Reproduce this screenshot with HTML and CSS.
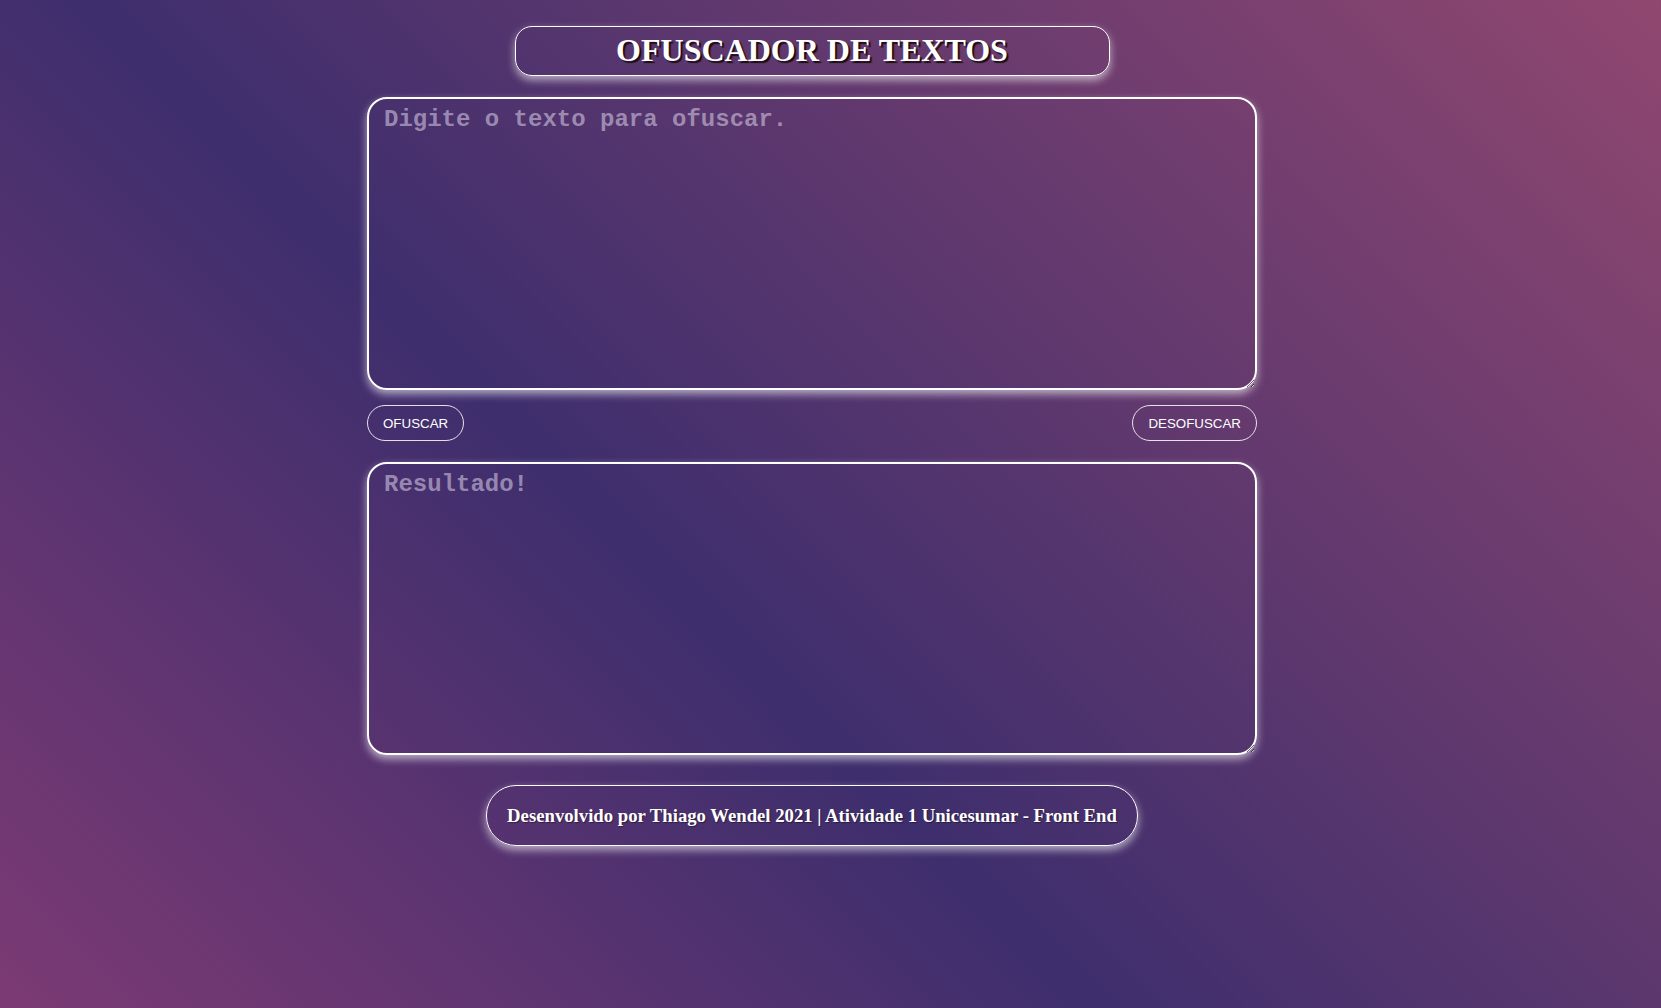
FILE: index.html
```html
<!DOCTYPE html>
<html lang="pt-BR">
<head>
<meta charset="utf-8">
<title>Ofuscador de Textos</title>
<link rel="stylesheet" href="styles.css">
</head>
<body>
<div class="page">
  <header class="title-box">
    <h1 class="title">OFUSCADOR DE TEXTOS</h1>
  </header>
  <main class="editor">
    <textarea class="field" placeholder="Digite o texto para ofuscar."></textarea>
    <div class="actions">
      <button class="btn" type="button">OFUSCAR</button>
      <button class="btn" type="button">DESOFUSCAR</button>
    </div>
    <textarea class="field" placeholder="Resultado!"></textarea>
  </main>
  <footer class="footer">
    <p class="footer-text">Desenvolvido por Thiago Wendel 2021 | Atividade 1 Unicesumar - Front End</p>
  </footer>
</div>
</body>
</html>
```

FILE: styles.css
```css
html, body {
  margin: 0;
  padding: 0;
}

body {
  min-height: 100vh;
  background: linear-gradient(45deg, #7c3a74 0%, #3e2e6d 41%, #904770 100%);
  font-family: "Liberation Serif", "Times New Roman", serif;
  color: #fff;
}

.page {
  width: 1624px;
  display: flex;
  flex-direction: column;
  align-items: center;
  padding-top: 26px;
}

.title-box {
  box-sizing: border-box;
  width: 595px;
  height: 50px;
  border: 1px solid #fff;
  border-radius: 17px;
  box-shadow: 0 4px 8px rgba(255, 255, 255, 0.6);
  display: flex;
  align-items: center;
  justify-content: center;
}

.title {
  margin: 0;
  font-size: 32px;
  font-weight: bold;
  color: #fff;
  text-shadow: 2px 2px 1px #1a0d10;
  position: relative;
  top: -1px;
}

.editor {
  width: 890px;
  margin-top: 21px;
  display: flex;
  flex-direction: column;
}

.field {
  box-sizing: border-box;
  width: 890px;
  height: 293px;
  margin: 0;
  border: 2px solid #fff;
  border-radius: 20px;
  background: transparent;
  box-shadow: 0 4px 8px rgba(255, 255, 255, 0.6);
  padding: 7px 15px;
  font-family: "Liberation Mono", "Courier New", monospace;
  font-weight: bold;
  font-size: 24px;
  color: #fff;
  outline: none;
  display: block;
}

.field::placeholder {
  color: rgba(215, 205, 228, 0.58);
}

.actions {
  display: flex;
  justify-content: space-between;
  margin: 15px 0 21px;
}

.btn {
  height: 36px;
  padding: 0 15px;
  border: 1px solid rgba(255, 255, 255, 0.85);
  border-radius: 18px;
  background: transparent;
  color: #fff;
  font-family: "Liberation Sans", Arial, sans-serif;
  font-size: 13.33px;
  cursor: pointer;
}

.footer {
  box-sizing: border-box;
  height: 61px;
  margin-top: 30px;
  padding: 0 20px;
  border: 1px solid #fff;
  border-radius: 30px;
  box-shadow: 0 4px 8px rgba(255, 255, 255, 0.6);
  display: flex;
  align-items: center;
}

.footer-text {
  margin: 0;
  font-size: 18.72px;
  font-weight: bold;
  color: #fff;
  text-shadow: 1px 1px 1px rgba(0, 0, 0, 0.4);
}
```
